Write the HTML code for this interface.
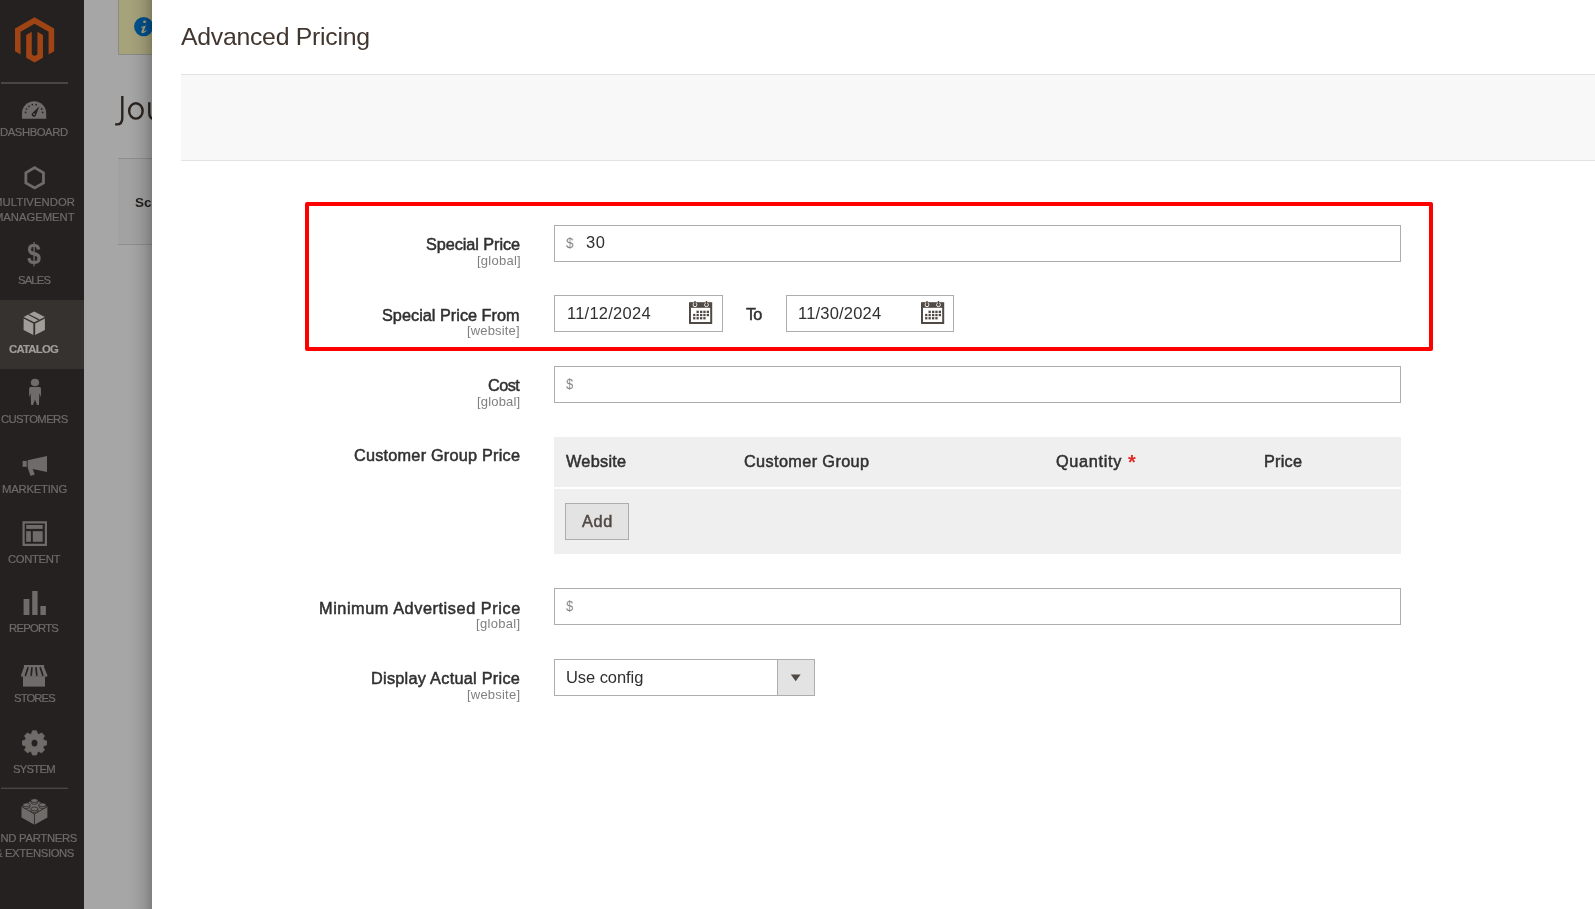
<!DOCTYPE html>
<html>
<head>
<meta charset="utf-8">
<title>Advanced Pricing</title>
<style>
html,body{margin:0;padding:0}
body{width:1595px;height:909px;overflow:hidden;position:relative;background:#a6a6a6;font-family:"Liberation Sans",sans-serif}
.t{position:absolute;white-space:nowrap;font-family:"Liberation Sans",sans-serif;will-change:transform}
.abs{position:absolute}
#side{position:absolute;left:0;top:0;width:84px;height:909px;background:#242120;overflow:hidden}
#side svg{position:absolute;left:0;top:0}
.notice{position:absolute;left:118px;top:-1px;width:60px;height:56px;background:#a6a37b;border-left:1px solid #8b8b86;border-bottom:1px solid #8b8b86;box-sizing:border-box}
.scope{position:absolute;left:118px;top:158px;width:60px;height:87px;background:#a2a2a2;border-top:1px solid #8e8e8e;border-bottom:1px solid #8e8e8e;box-sizing:border-box}
.shade{position:absolute;left:128px;top:0;width:24px;height:909px;background:linear-gradient(to right,rgba(0,0,0,0) 0%,rgba(0,0,0,0.024) 29%,rgba(0,0,0,0.06) 50%,rgba(0,0,0,0.11) 71%,rgba(0,0,0,0.2) 92%,rgba(0,0,0,0.23) 100%)}
#modal{position:absolute;left:152px;top:0;width:1443px;height:909px;background:#fff}
.bar{position:absolute;left:181px;top:74px;width:1414px;height:87px;background:#f8f8f8;border-top:1px solid #e3e3e3;border-bottom:1px solid #e3e3e3;box-sizing:border-box}
.inp{position:absolute;background:#fff;border:1px solid #adadad;box-sizing:border-box}
.red{position:absolute;left:305px;top:202px;width:1128px;height:149px;border:4px solid #ff0000;border-radius:2px;box-sizing:border-box}
.tbl{position:absolute;left:554px;top:437px;width:847px;height:117px;background:#efefef}
.tsep{position:absolute;left:554px;top:487px;width:847px;height:2px;background:#fff}
.btn{position:absolute;left:565px;top:503px;width:64px;height:37px;background:#e3e3e3;border:1px solid #adadad;box-sizing:border-box}
.dollar{position:absolute;font-size:14.5px;line-height:14.5px;color:#858585;font-family:"Liberation Sans",sans-serif}
</style>
</head>
<body>
<!-- background admin page (under overlay) -->
<div class="notice"></div>
<svg class="abs" style="left:130px;top:14px" width="28" height="28" viewBox="130 14 28 28">
  <circle cx="143.7" cy="26.6" r="9.6" fill="#00518f"/>
  <ellipse cx="144.6" cy="21.7" rx="1.6" ry="1.25" fill="#a6a37b"/>
  <path d="M141 27L145.9 25.5L143.6 31.6L146.6 30.1L146.1 31.3Q143.6 33.5 141.9 33.1Q141 32.7 141.4 31.6L143 27.4L141.1 27.8z" fill="#a6a37b"/>
</svg>
<div class="scope"></div>
<svg class="abs" style="left:100px;top:85px" width="60" height="50" viewBox="100 85 60 50">
  <g fill="none" stroke="#2a231f" stroke-width="2.4">
    <path d="M122.3 96v22.2q0 6.2 -5.6 6.2h-1.6"/>
    <ellipse cx="135.9" cy="110.9" rx="6.75" ry="7.7"/>
    <path d="M149.3 102.2v10.5q0 6.4 5.2 6.4q5.2 0 6.5 -3.5"/>
  </g>
</svg>
<div class=t style="left:135.40px;top:195.60px;font-size:13.5px;line-height:13.5px;font-weight:bold;color:#231f1c;letter-spacing:0.000px;">Scope</div>
<div class="shade"></div>

<div id="modal"></div>
<div class="bar"></div>

<div class="red"></div>

<div class="inp" style="left:554px;top:225px;width:847px;height:37px"></div>
<div class="inp" style="left:554px;top:295px;width:169px;height:37px"></div>
<div class="inp" style="left:786px;top:295px;width:168px;height:37px"></div>
<div class="inp" style="left:554px;top:366px;width:847px;height:37px"></div>
<div class="tbl"></div>
<div class="tsep"></div>
<div class="btn"></div>
<div class="inp" style="left:554px;top:588px;width:847px;height:37px"></div>
<div class="inp" style="left:554px;top:659px;width:261px;height:37px"></div>
<div class="abs" style="left:777px;top:660px;width:36px;height:35px;background:#e3e3e3;border-left:1px solid #adadad"></div>
<svg class="abs" style="left:786px;top:670px" width="20" height="16" viewBox="0 0 20 16">
  <path d="M4.8 4.6h9.8l-4.9 6.7z" fill="#514943"/>
</svg>

<!-- calendar icons -->
<svg class="abs" style="left:684px;top:296px" width="34" height="32" viewBox="0 0 34 32">
  <g>
  <rect x="5" y="6.2" width="23.2" height="21.8" fill="#514943"/>
  <rect x="7" y="11.8" width="19.2" height="14.2" fill="#fff"/>
  <circle cx="11" cy="8.8" r="1.9" fill="none" stroke="#fff" stroke-width="0.9"/>
  <circle cx="22.5" cy="8.8" r="1.9" fill="none" stroke="#fff" stroke-width="0.9"/>
  <rect x="10.3" y="5" width="1.4" height="4.6" fill="#514943"/>
  <rect x="21.8" y="5" width="1.4" height="4.6" fill="#514943"/>
  <g fill="#514943">
    <rect x="12.5" y="14.7" width="2.3" height="2.3"/><rect x="16" y="14.7" width="2.3" height="2.3"/><rect x="19.3" y="14.7" width="2.3" height="2.3"/><rect x="22.7" y="14.7" width="2.3" height="2.3"/>
    <rect x="9.1" y="17.9" width="2.3" height="2.3"/><rect x="12.5" y="17.9" width="2.3" height="2.3"/><rect x="16" y="17.9" width="2.3" height="2.3"/><rect x="19.3" y="17.9" width="2.3" height="2.3"/><rect x="22.7" y="17.9" width="2.3" height="2.3"/>
    <rect x="9.1" y="21.1" width="2.3" height="2.3"/><rect x="12.5" y="21.1" width="2.3" height="2.3"/><rect x="16" y="21.1" width="2.3" height="2.3"/><rect x="19.3" y="21.1" width="2.3" height="2.3"/>
  </g>
  </g>
</svg>
<svg class="abs" style="left:916px;top:296px" width="34" height="32" viewBox="0 0 34 32">
  <g>
  <rect x="5" y="6.2" width="23.2" height="21.8" fill="#514943"/>
  <rect x="7" y="11.8" width="19.2" height="14.2" fill="#fff"/>
  <circle cx="11" cy="8.8" r="1.9" fill="none" stroke="#fff" stroke-width="0.9"/>
  <circle cx="22.5" cy="8.8" r="1.9" fill="none" stroke="#fff" stroke-width="0.9"/>
  <rect x="10.3" y="5" width="1.4" height="4.6" fill="#514943"/>
  <rect x="21.8" y="5" width="1.4" height="4.6" fill="#514943"/>
  <g fill="#514943">
    <rect x="12.5" y="14.7" width="2.3" height="2.3"/><rect x="16" y="14.7" width="2.3" height="2.3"/><rect x="19.3" y="14.7" width="2.3" height="2.3"/><rect x="22.7" y="14.7" width="2.3" height="2.3"/>
    <rect x="9.1" y="17.9" width="2.3" height="2.3"/><rect x="12.5" y="17.9" width="2.3" height="2.3"/><rect x="16" y="17.9" width="2.3" height="2.3"/><rect x="19.3" y="17.9" width="2.3" height="2.3"/><rect x="22.7" y="17.9" width="2.3" height="2.3"/>
    <rect x="9.1" y="21.1" width="2.3" height="2.3"/><rect x="12.5" y="21.1" width="2.3" height="2.3"/><rect x="16" y="21.1" width="2.3" height="2.3"/><rect x="19.3" y="21.1" width="2.3" height="2.3"/>
  </g>
  </g>
</svg>


<div class=t style="left:181.00px;top:25.40px;font-size:24.8px;line-height:24.8px;font-weight:normal;color:#41362f;letter-spacing:-0.267px;">Advanced Pricing</div>
<div class=t style="left:425.50px;top:236.00px;font-size:16.3px;line-height:16.3px;font-weight:normal;color:#303030;letter-spacing:-0.075px;-webkit-text-stroke:0.5px currentColor;">Special Price</div>
<div class=t style="left:476.80px;top:253.90px;font-size:13px;line-height:13px;font-weight:normal;color:#808080;letter-spacing:0.257px;">[global]</div>
<div class=t style="left:382.00px;top:306.70px;font-size:16.3px;line-height:16.3px;font-weight:normal;color:#303030;letter-spacing:0.006px;-webkit-text-stroke:0.5px currentColor;">Special Price From</div>
<div class=t style="left:467.20px;top:324.20px;font-size:13px;line-height:13px;font-weight:normal;color:#808080;letter-spacing:0.163px;">[website]</div>
<div class=t style="left:487.70px;top:376.90px;font-size:16.3px;line-height:16.3px;font-weight:normal;color:#303030;letter-spacing:-0.533px;-webkit-text-stroke:0.5px currentColor;">Cost</div>
<div class=t style="left:477.00px;top:394.70px;font-size:13px;line-height:13px;font-weight:normal;color:#808080;letter-spacing:0.186px;">[global]</div>
<div class=t style="left:353.50px;top:447.20px;font-size:16.3px;line-height:16.3px;font-weight:normal;color:#303030;letter-spacing:0.211px;-webkit-text-stroke:0.5px currentColor;">Customer Group Price</div>
<div class=t style="left:318.50px;top:600.00px;font-size:16.3px;line-height:16.3px;font-weight:normal;color:#303030;letter-spacing:0.565px;-webkit-text-stroke:0.5px currentColor;">Minimum Advertised Price</div>
<div class=t style="left:476.30px;top:617.00px;font-size:13px;line-height:13px;font-weight:normal;color:#808080;letter-spacing:0.314px;">[global]</div>
<div class=t style="left:370.50px;top:670.00px;font-size:16.3px;line-height:16.3px;font-weight:normal;color:#303030;letter-spacing:0.263px;-webkit-text-stroke:0.5px currentColor;">Display Actual Price</div>
<div class=t style="left:466.80px;top:687.50px;font-size:13px;line-height:13px;font-weight:normal;color:#808080;letter-spacing:0.212px;">[website]</div>
<div class=t style="left:746.30px;top:306.30px;font-size:16.3px;line-height:16.3px;font-weight:normal;color:#303030;letter-spacing:-0.800px;-webkit-text-stroke:0.5px currentColor;">To</div>
<div class=t style="left:585.70px;top:234.00px;font-size:16.5px;line-height:16.5px;font-weight:normal;color:#303030;letter-spacing:0.500px;">30</div>
<div class=t style="left:566.60px;top:305.00px;font-size:16.5px;line-height:16.5px;font-weight:normal;color:#303030;letter-spacing:0.244px;">11/12/2024</div>
<div class=t style="left:798.20px;top:305.00px;font-size:16.5px;line-height:16.5px;font-weight:normal;color:#303030;letter-spacing:0.200px;">11/30/2024</div>
<div class=t style="left:565.90px;top:452.90px;font-size:16.3px;line-height:16.3px;font-weight:normal;color:#303030;letter-spacing:0.267px;-webkit-text-stroke:0.5px currentColor;">Website</div>
<div class=t style="left:743.90px;top:453.10px;font-size:16.3px;line-height:16.3px;font-weight:normal;color:#303030;letter-spacing:0.362px;-webkit-text-stroke:0.5px currentColor;">Customer Group</div>
<div class=t style="left:1055.50px;top:453.10px;font-size:16.3px;line-height:16.3px;font-weight:normal;color:#303030;letter-spacing:0.671px;-webkit-text-stroke:0.5px currentColor;">Quantity</div>
<div class=t style="left:1264.10px;top:453.10px;font-size:16.3px;line-height:16.3px;font-weight:normal;color:#303030;letter-spacing:0.225px;-webkit-text-stroke:0.5px currentColor;">Price</div>
<div class=t style="left:582.30px;top:513.00px;font-size:16.3px;line-height:16.3px;font-weight:normal;color:#514943;letter-spacing:0.650px;-webkit-text-stroke:0.5px currentColor;">Add</div>
<div class=t style="left:566.00px;top:669.00px;font-size:16.5px;line-height:16.5px;font-weight:normal;color:#303030;letter-spacing:-0.067px;">Use config</div>
<div class=t style="left:565.70px;top:235.10px;font-size:15.37px;line-height:15.37px;font-weight:normal;color:#858585;transform:scaleX(0.889);transform-origin:0px 0;">$</div>
<div class=t style="left:566.20px;top:376.00px;font-size:15.49px;line-height:15.49px;font-weight:normal;color:#858585;transform:scaleX(0.833);transform-origin:0px 0;">$</div>
<div class=t style="left:566.20px;top:598.00px;font-size:15.49px;line-height:15.49px;font-weight:normal;color:#858585;transform:scaleX(0.833);transform-origin:0px 0;">$</div>
<div class=t style="left:1127.60px;top:452.20px;font-size:20.0px;line-height:20.0px;font-weight:bold;color:#e02b27;">*</div>

<!-- sidebar -->
<div id="side">
<svg width="84" height="909" viewBox="0 0 84 909">
  <!-- logo -->
  <g transform="translate(11.97 17.3) scale(1.885)" fill="#9e4415">
    <path d="M12 24l-4.455-2.572v-12l2.97-1.715v12.001L12 20.573l1.485-.859V7.712l2.971 1.715v12L12 24zM22.391 6v12l-2.969 1.714V7.713L12 3.43 4.574 7.713v12.001L1.609 18V6L12 0l10.391 6z"/>
  </g>
  <rect x="1" y="82" width="67" height="2" fill="#4b4541"/>
  <!-- dashboard -->
  <path d="M22 118.8V113.4A12.1 12.1 0 0 1 46.2 113.4V118.8z" fill="#6e6c68"/>
  <g fill="#242120">
    <path d="M39.4 106.3L35.9 115.2A2.1 2.1 0 1 1 32.4 113.1z"/>
    <circle cx="25.6" cy="112.4" r="0.85"/><circle cx="26.5" cy="109" r="0.85"/><circle cx="29" cy="106.3" r="0.85"/><circle cx="32.3" cy="104.6" r="0.85"/><circle cx="36.2" cy="104.7" r="0.85"/><circle cx="41.6" cy="108.9" r="0.85"/><circle cx="42.7" cy="112.4" r="0.85"/>
  </g>
  <circle cx="34" cy="114.2" r="0.9" fill="#6e6c68"/>
  <!-- hexagon -->
  <path d="M34.65 167.6l8.8 5.1v10.2l-8.8 5.1l-8.8 -5.1v-10.2z" fill="none" stroke="#6e6c68" stroke-width="2.8"/>
  <!-- catalog active bg -->
  <rect x="0" y="300" width="84" height="69" fill="#35322f"/>
  <!-- box -->
  <g fill="#a09e99">
    <path d="M34.2 311.5l10.7 5.4l-10.7 5.4l-10.6 -5.4z"/>
    <path d="M23.6 318.6l9.7 4.9v11.5l-9.7 -4.9z"/>
    <path d="M44.9 318.6l-9.7 4.9v11.5l9.7 -4.9z"/>
  </g>
  <path d="M28.6 314.5l10.5 5.3" stroke="#35322f" stroke-width="1.3"/>
  <!-- customers -->
  <g fill="#6e6c68">
    <ellipse cx="35" cy="382.45" rx="4.15" ry="3.8"/>
    <path d="M29.1 388.4q0 -1.5 1.5 -1.5h8.9q1.5 0 1.5 1.5L41 397.2L39.4 393.2L38.9 405.1h-1.9L35 399.4L33 405.1h-1.9L30.6 393.2L29.1 397.2z"/>
  </g>
  <!-- marketing megaphone -->
  <g fill="#6e6c68">
    <path d="M22.6 460.9h4.15v5.9h-4.15z"/>
    <path d="M27.7 460.2L47 455.9V472L32.7 469L34.8 474.6L30.5 476.1L27.7 467.8z"/>
  </g>
  <!-- content -->
  <g fill="#6e6c68">
    <path d="M22.5 521.2h24.5v24.8h-24.5zM24.7 523.4v20.4h20.1v-20.4z" fill-rule="evenodd"/>
    <rect x="26.2" y="525" width="16.5" height="3.9"/>
    <rect x="26.2" y="531.2" width="4.7" height="10.6"/>
    <rect x="32.8" y="531.2" width="9.9" height="10.6"/>
  </g>
  <!-- reports -->
  <g fill="#6e6c68">
    <rect x="23.6" y="599" width="5.8" height="16"/>
    <rect x="32.2" y="591" width="5.4" height="24"/>
    <rect x="40.4" y="606" width="5.5" height="9"/>
  </g>
  <!-- stores -->
  <g fill="#6e6c68">
    <path d="M23.9 665h20.2v2.2L47.4 675.2q0.3 1.5 -1.2 1.5h-24q-1.5 0 -1.2 -1.5L23.9 667.2z"/>
    <rect x="23" y="676.4" width="22" height="10.2"/>
  </g>
  <g stroke="#242120" stroke-width="1.7" stroke-linecap="round">
    <path d="M28 667.8L25.5 675.2M31.9 667.8L31.2 675.2M36 667.8L36.8 675.2M40.3 667.8L42.8 675.2"/>
  </g>
  <!-- gear -->
  <g transform="translate(34.5 742.9)">
    <path d="M-2.95 -9.03 L-1.99 -12.04 L1.99 -12.04 L2.95 -9.03 L4.30 -8.47 L7.10 -9.92 L9.92 -7.10 L8.47 -4.30 L9.03 -2.95 L12.04 -1.99 L12.04 1.99 L9.03 2.95 L8.47 4.30 L9.92 7.10 L7.10 9.92 L4.30 8.47 L2.95 9.03 L1.99 12.04 L-1.99 12.04 L-2.95 9.03 L-4.30 8.47 L-7.10 9.92 L-9.92 7.10 L-8.47 4.30 L-9.03 2.95 L-12.04 1.99 L-12.04 -1.99 L-9.03 -2.95 L-8.47 -4.30 L-9.92 -7.10 L-7.10 -9.92 L-4.30 -8.47z M0 -3.7a3.5 3.9 0 1 0 0.01 0z" fill="#6e6c68" fill-rule="evenodd" stroke="#6e6c68" stroke-width="0.9" stroke-linejoin="round"/>
  </g>
  <rect x="1" y="787.6" width="67" height="1.4" fill="#4b4541"/>
  <!-- lego -->
  <path d="M34.45 799l12.95 7.5v11l-12.95 7.3l-12.95 -7.3v-11z" fill="#6e6c68"/>
  <path d="M21.5 806.5l12.95 7.5l12.95 -7.5M34.45 814v10.8" stroke="#242120" stroke-width="0.8" fill="none"/>
  <g fill="#6e6c68" stroke="#242120" stroke-width="0.7">
    <path d="M30.9 800.6v1.8a3.55 1.9 0 0 0 7.1 0v-1.8"/><ellipse cx="34.45" cy="800.6" rx="3.55" ry="1.9"/>
    <path d="M22.9 804.8v1.8a3.55 1.9 0 0 0 7.1 0v-1.8"/><ellipse cx="26.45" cy="804.8" rx="3.55" ry="1.9"/>
    <path d="M38.9 804.8v1.8a3.55 1.9 0 0 0 7.1 0v-1.8"/><ellipse cx="42.45" cy="804.8" rx="3.55" ry="1.9"/>
    <path d="M30.9 808.9v1.8a3.55 1.9 0 0 0 7.1 0v-1.8"/><ellipse cx="34.45" cy="808.9" rx="3.55" ry="1.9"/>
  </g>
</svg>
<div class=t style="left:0.00px;top:127.10px;font-size:11.3px;line-height:11.3px;font-weight:normal;color:#6e6c68;letter-spacing:-0.438px;-webkit-text-stroke:0.2px currentColor;">DASHBOARD</div>
<div class=t style="left:-6.60px;top:197.10px;font-size:11.3px;line-height:11.3px;font-weight:normal;color:#6e6c68;letter-spacing:0.060px;-webkit-text-stroke:0.2px currentColor;">MULTIVENDOR</div>
<div class=t style="left:-6.10px;top:212.00px;font-size:11.3px;line-height:11.3px;font-weight:normal;color:#6e6c68;letter-spacing:-0.044px;-webkit-text-stroke:0.2px currentColor;">MANAGEMENT</div>
<div class=t style="left:17.80px;top:275.20px;font-size:11.3px;line-height:11.3px;font-weight:normal;color:#6e6c68;letter-spacing:-0.875px;-webkit-text-stroke:0.2px currentColor;">SALES</div>
<div class=t style="left:9.40px;top:344.10px;font-size:11.3px;line-height:11.3px;font-weight:bold;color:#a09e99;letter-spacing:-0.733px;-webkit-text-stroke:0.2px currentColor;">CATALOG</div>
<div class=t style="left:0.80px;top:414.00px;font-size:11.3px;line-height:11.3px;font-weight:normal;color:#6e6c68;letter-spacing:-0.600px;-webkit-text-stroke:0.2px currentColor;">CUSTOMERS</div>
<div class=t style="left:1.70px;top:484.10px;font-size:11.3px;line-height:11.3px;font-weight:normal;color:#6e6c68;letter-spacing:-0.238px;-webkit-text-stroke:0.2px currentColor;">MARKETING</div>
<div class=t style="left:7.80px;top:554.10px;font-size:11.3px;line-height:11.3px;font-weight:normal;color:#6e6c68;letter-spacing:-0.350px;-webkit-text-stroke:0.2px currentColor;">CONTENT</div>
<div class=t style="left:9.40px;top:623.30px;font-size:11.3px;line-height:11.3px;font-weight:normal;color:#6e6c68;letter-spacing:-0.750px;-webkit-text-stroke:0.2px currentColor;">REPORTS</div>
<div class=t style="left:13.50px;top:693.10px;font-size:11.3px;line-height:11.3px;font-weight:normal;color:#6e6c68;letter-spacing:-0.900px;-webkit-text-stroke:0.2px currentColor;">STORES</div>
<div class=t style="left:12.90px;top:763.50px;font-size:11.3px;line-height:11.3px;font-weight:normal;color:#6e6c68;letter-spacing:-0.780px;-webkit-text-stroke:0.2px currentColor;">SYSTEM</div>
<div class=t style="left:-8.60px;top:833.10px;font-size:11.3px;line-height:11.3px;font-weight:normal;color:#6e6c68;letter-spacing:-0.300px;-webkit-text-stroke:0.2px currentColor;">FIND PARTNERS</div>
<div class=t style="left:-4.60px;top:848.00px;font-size:11.3px;line-height:11.3px;font-weight:normal;color:#6e6c68;letter-spacing:-0.373px;-webkit-text-stroke:0.2px currentColor;">&amp; EXTENSIONS</div>
<div class=t style="left:27.20px;top:240.00px;font-size:29.27px;line-height:29.27px;font-weight:bold;color:#6e6c68;transform:scaleX(0.856);transform-origin:0px 0;">$</div>
</div>
</body>
</html>
